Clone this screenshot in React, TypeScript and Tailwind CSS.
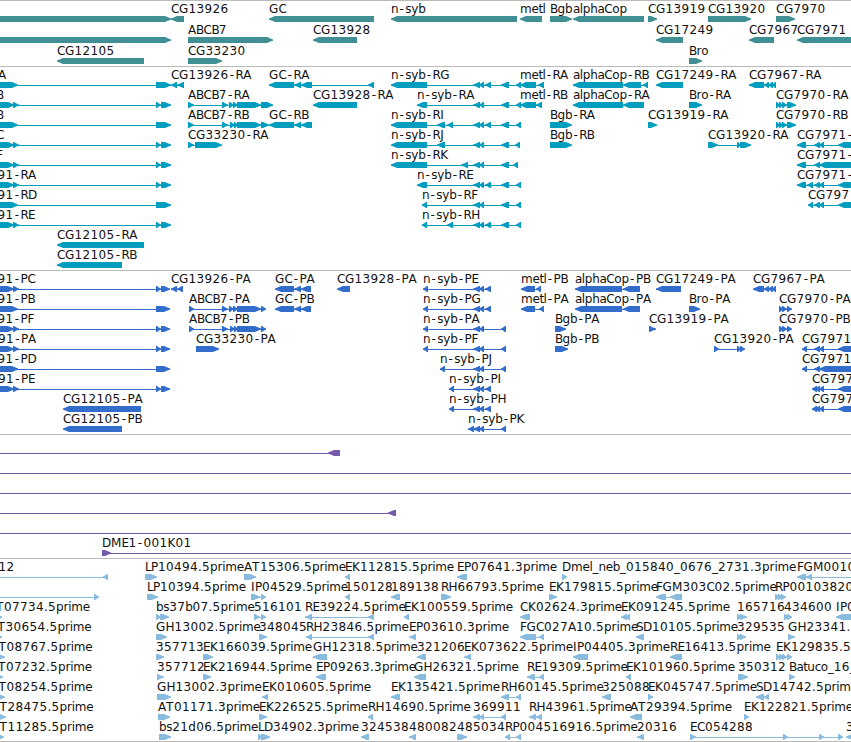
type Dir = '<' | '>'
type Span = [number, number]
// label, strand, exons, label x when it differs from the first exon
type Item = [string, Dir, Span[], number?]

const ARROW = 6

// glyph advances of the 12px label font, digits take 8
const ADVANCE: Record<string, number> = {
  A: 8, B: 7.4, C: 8, D: 9, E: 7, F: 6.5, G: 9.6, H: 9, I: 4, J: 4, K: 8, L: 6, M: 10.5, P: 7, R: 7.6, S: 7, T: 8,
  a: 6.8, b: 7.3, c: 6, d: 8, e: 7, g: 7.5, h: 7.2, i: 3, l: 3, m: 11.5, n: 7.3, o: 7.1, p: 7.5, r: 4.8, s: 6, t: 4,
  u: 7.5, y: 7, '-': 7, '.': 4, _: 6,
}

// exon groups shared by several transcripts
const LEFT_A: Span[] = [[-20, 18], [156, 171]]
const LEFT_B: Span[] = [[-20, 14], [13, 19], [156, 161], [161, 171]]
const LEFT_PA: Span[] = [[-20, 18], [156, 170]]
const LEFT_PB: Span[] = [[-20, 14], [13, 19], [156, 161], [161, 170]]
const SYB: Span[] = [[473, 480], [479, 484]]
const SYB3: Span[] = [...SYB, [485, 491]]
const SYB_END: Span[] = [[501, 509], [516, 521]]

const genes: Item[][] = [
  [
    ['', '>', [[-20, 171]]],
    ['CG13926', '<', [[171, 184]]],
    ['GC', '<', [[269, 374]]],
    ['n-syb', '<', [[391, 517]]],
    ['metl', '<', [[520, 542]]],
    ['Bgb', '>', [[550, 572]]],
    ['alphaCop', '<', [[573, 644]]],
    ['CG13919', '>', [[648, 657]]],
    ['CG13920', '>', [[708, 751]]],
    ['CG7970', '>', [[776, 795]]],
  ],
  [
    ['', '>', [[-20, 171]]],
    ['ABCB7', '>', [[188, 273]]],
    ['CG13928', '<', [[313, 357]]],
    ['CG17249', '<', [[656, 683]]],
    ['CG7967', '<', [[749, 774]]],
    ['CG7971', '<', [[797, 870]]],
  ],
  [
    ['CG12105', '<', [[57, 144]]],
    ['CG33230', '>', [[188, 222]]],
    ['Bro', '>', [[689, 702]]],
  ],
]

const transcripts: Item[][] = [
  [
    ['A', '>', LEFT_A, -2],
    ['CG13926-RA', '<', [[171, 177], [177, 184]]],
    ['GC-RA', '<', [[269, 294], [294, 301], [301, 312], [368, 374]]],
    ['n-syb-RG', '<', [[391, 427], ...SYB3, ...SYB_END]],
    ['metl-RA', '<', [[520, 536], [538, 544]]],
    ['alphaCop-RB', '<', [[573, 623], [623, 641], [643, 648]]],
    ['CG17249-RA', '<', [[656, 683]]],
    ['CG7967-RA', '<', [[749, 764], [764, 769], [768, 773], [772, 776]]],
  ],
  [
    ['B', '>', LEFT_B, -4],
    ['ABCB7-RA', '>', [[188, 194], [222, 228], [229, 234], [233, 238], [237, 261], [261, 273]]],
    ['CG13928-RA', '<', [[313, 357]]],
    ['n-syb-RA', '<', [[417, 427], ...SYB, ...SYB_END]],
    ['metl-RB', '<', [[520, 536], [536, 542]]],
    ['alphaCop-RA', '<', [[573, 623], [623, 644]]],
    ['Bro-RA', '>', [[689, 702]]],
    ['CG7970-RA', '>', [[776, 780], [779, 783], [782, 787], [787, 796]]],
  ],
  [
    ['B', '>', LEFT_A, -4],
    ['ABCB7-RB', '>', [[188, 194], [222, 228], [230, 235], [234, 238], [237, 261], [261, 269]]],
    ['GC-RB', '<', [[269, 294], [294, 301], [301, 312]]],
    ['n-syb-RI', '<', [[391, 427], [437, 445], [447, 453], ...SYB3, ...SYB_END]],
    ['Bgb-RA', '>', [[550, 572]]],
    ['CG13919-RA', '>', [[648, 657]]],
    ['CG7970-RB', '>', [[776, 780], [779, 783], [782, 787], [787, 796]]],
  ],
  [
    ['C', '>', LEFT_B, -4],
    ['CG33230-RA', '>', [[188, 194], [195, 222]]],
    ['n-syb-RJ', '<', [[391, 427], [437, 445], ...SYB, [501, 509], [515, 520]]],
    ['Bgb-RB', '>', [[550, 572]]],
    ['CG13920-RA', '>', [[708, 718], [737, 741], [740, 751]]],
    ['CG7971-', '<', [[797, 806], [814, 820], [819, 824], [838, 870]]],
  ],
  [
    ['F', '>', LEFT_B, -4],
    ['n-syb-RK', '<', [[391, 427], [461, 468], ...SYB, [501, 509], [513, 518]]],
    ['CG7971-', '<', [[797, 806], [814, 820], [819, 870]]],
  ],
  [
    ['91-RA', '>', LEFT_B, -2.5],
    ['n-syb-RE', '<', [[417, 427], ...SYB3, ...SYB_END]],
    ['CG7971-', '<', [[797, 806], [807, 813], [814, 820], [819, 824], [838, 870]]],
  ],
  [
    ['91-RD', '>', LEFT_A, -2.5],
    ['n-syb-RF', '<', [[422, 427], ...SYB, ...SYB_END]],
    ['CG797', '<', [[808, 813], [814, 820], [819, 824], [838, 870]]],
  ],
  [
    ['91-RE', '>', LEFT_B, -2.5],
    ['n-syb-RH', '<', [[422, 427], [447, 453], ...SYB3, ...SYB_END]],
  ],
  [['CG12105-RA', '<', [[57, 144]]]],
  [['CG12105-RB', '<', [[57, 122]]]],
]

const proteins: Item[][] = [
  [
    ['91-PC', '>', LEFT_PB, -2.5],
    ['CG13926-PA', '<', [[171, 177], [177, 183]]],
    ['GC-PA', '<', [[275, 294], [294, 301], [301, 311]]],
    ['CG13928-PA', '<', [[337, 350]]],
    ['n-syb-PE', '<', [[423, 428], ...SYB3]],
    ['metl-PB', '<', [[521, 535], [536, 541]]],
    ['alphaCop-PB', '<', [[575, 622], [623, 640]]],
    ['CG17249-PA', '<', [[656, 681]]],
    ['CG7967-PA', '<', [[753, 764], [764, 769], [768, 773], [772, 776]]],
  ],
  [
    ['91-PB', '>', LEFT_PA, -2.5],
    ['ABCB7-PA', '>', [[189, 194], [222, 228], [229, 234], [233, 238], [237, 261], [261, 266]]],
    ['GC-PB', '<', [[275, 294], [294, 301], [301, 311]]],
    ['n-syb-PG', '<', [[423, 428], ...SYB3]],
    ['metl-PA', '<', [[521, 535], [539, 544]]],
    ['alphaCop-PA', '<', [[575, 622], [623, 640]]],
    ['Bro-PA', '>', [[689, 700]]],
    ['CG7970-PA', '>', [[779, 783], [782, 787], [787, 792]]],
  ],
  [
    ['91-PF', '>', LEFT_PB, -2.5],
    ['ABCB7-PB', '>', [[189, 194], [222, 228], [230, 235], [234, 238], [237, 261], [261, 266]]],
    ['n-syb-PA', '<', [[423, 428], ...SYB, [501, 506]]],
    ['Bgb-PA', '>', [[555, 566]]],
    ['CG13919-PA', '>', [[649, 656]]],
    ['CG7970-PB', '>', [[779, 783], [782, 787], [787, 792]]],
  ],
  [
    ['91-PA', '>', LEFT_PB, -2],
    ['CG33230-PA', '>', [[196, 219]]],
    ['n-syb-PF', '<', [[423, 428], ...SYB, [501, 506]]],
    ['Bgb-PB', '>', [[555, 568]]],
    ['CG13920-PA', '>', [[714, 719], [737, 741], [740, 745]]],
    ['CG7971', '<', [[802, 807], [814, 820], [819, 824], [838, 870]]],
  ],
  [
    ['91-PD', '>', LEFT_PA, -2.5],
    ['n-syb-PJ', '<', [[440, 445], ...SYB, [501, 506]]],
    ['CG7971', '<', [[802, 807], [814, 820], [819, 870]]],
  ],
  [
    ['91-PE', '>', LEFT_PB, -2],
    ['n-syb-PI', '<', [[449, 454], ...SYB3]],
    ['CG797', '<', [[812, 817], [815, 820], [819, 824], [838, 870]]],
  ],
  [
    ['CG12105-PA', '<', [[63, 141]]],
    ['n-syb-PH', '<', [[449, 454], ...SYB3]],
    ['CG797', '<', [[812, 817], [815, 820], [819, 824], [838, 870]]],
  ],
  [
    ['CG12105-PB', '<', [[63, 122]]],
    ['n-syb-PK', '<', [[468, 474], ...SYB, [501, 506]]],
  ],
]

const clones: Item[][] = [
  [['', '<', [[-20, -10], [328, 340]]]],
  [['', '<', [[-20, -10], [860, 870]]]],
  [['', '<', [[-20, -10], [860, 870]]]],
  [['', '<', [[-20, -10], [388, 396]]]],
  [['', '<', [[-20, -10], [860, 870]]]],
  [['DME1-001K01', '>', [[102, 111], [860, 870]]]],
]

const ests: Item[][] = [
  [
    ['12', '<', [[-20, -10], [103, 108]], -1.5],
    ['LP10494.5prime', '>', [[145, 157]]],
    ['AT15306.5prime', '>', [[244, 256]]],
    ['EK112815.5prime', '<', [[345, 350]]],
    ['EP07641.3prime', '<', [[457, 467]]],
    ['Dmel_neb_015840_0676_2731.3prime', '>', [[562, 567]]],
    ['FGM0010', '<', [[797, 806], [806, 812], [860, 870]]],
  ],
  [
    ['', '>', [[-20, -10], [94, 99]]],
    ['LP10394.5prime', '>', [[147, 158]]],
    ['IP04529.5prime', '>', [[251, 260], [261, 266]]],
    ['150128', '<', [[345, 350]]],
    ['189138', '<', [[391, 400]]],
    ['RH66793.5prime', '>', [[441, 451]]],
    ['EK179815.5prime', '>', [[549, 557]]],
    ['FGM303C02.5prime', '<', [[656, 666], [670, 682]]],
    ['RP00103820', '>', [[775, 780], [778, 783], [781, 786]]],
  ],
  [
    ['T07734.5prime', '>', [[-8, 2]], -4],
    ['bs37b07.5prime', '>', [[156, 161], [160, 169]]],
    ['516101', '>', [[254, 260], [261, 266]]],
    ['RE39224.5prime', '<', [[305, 312], [368, 374]]],
    ['EK100559.5prime', '<', [[404, 409]]],
    ['CK02624.3prime', '<', [[520, 530]]],
    ['EK091245.5prime', '<', [[621, 627], [625, 630]]],
    ['165716', '>', [[737, 742], [740, 747]]],
    ['434600', '>', [[784, 789], [787, 792]]],
    ['IP0', '<', [[836, 870]]],
  ],
  [
    ['T30654.5prime', '>', [[-8, 2]], -2.5],
    ['GH13002.5prime', '>', [[156, 167]]],
    ['348045', '>', [[259, 267]]],
    ['RH23846.5prime', '<', [[306, 312], [368, 374]]],
    ['EP03610.3prime', '<', [[409, 416]]],
    ['FGC027A10.5prime', '<', [[520, 536], [539, 544]]],
    ['SD10105.5prime', '<', [[636, 644]]],
    ['329535', '>', [[737, 742], [740, 746]]],
    ['GH23341.', '>', [[788, 795]]],
  ],
  [
    ['T08767.5prime', '>', [[-8, 5]], -1.5],
    ['357713', '>', [[156, 164]]],
    ['EK166039.5prime', '>', [[203, 213]]],
    ['GH12318.5prime', '<', [[313, 327]]],
    ['321206', '<', [[417, 426]]],
    ['EK073622.5prime', '<', [[464, 471]]],
    ['IP04405.3prime', '<', [[573, 588]]],
    ['RE16413.5prime', '<', [[670, 682]]],
    ['EK129835.5', '>', [[776, 780], [779, 784], [782, 787], [787, 792]]],
  ],
  [
    ['T07232.5prime', '>', [[-8, 3]], -2],
    ['357712', '>', [[157, 164]]],
    ['EK216944.5prime', '>', [[203, 211]]],
    ['EP09263.3prime', '<', [[316, 326]]],
    ['GH26321.5prime', '<', [[414, 426]]],
    ['RE19309.5prime', '<', [[527, 535], [539, 544]]],
    ['EK101960.5prime', '<', [[626, 631]]],
    ['350312', '>', [[738, 748]]],
    ['Batuco_16_', '>', [[789, 795]]],
  ],
  [
    ['T08254.5prime', '>', [[-8, 5]], -1.5],
    ['GH13002.3prime', '>', [[157, 171]]],
    ['EK010605.5prime', '<', [[262, 268]]],
    ['EK135421.5prime', '<', [[391, 400]]],
    ['RH60145.5prime', '<', [[501, 509], [516, 521]]],
    ['325088', '<', [[602, 611]]],
    ['EK045747.5prime', '>', [[648, 653]]],
    ['SD14742.5prime', '<', [[756, 764], [764, 769]]],
  ],
  [
    ['T28475.5prime', '>', [[-8, 6]], -0.5],
    ['AT01171.3prime', '>', [[158, 170]]],
    ['EK226525.5prime', '>', [[259, 267]]],
    ['RH14690.5prime', '<', [[368, 373]]],
    ['369911', '<', [...SYB, [501, 506]]],
    ['RH43961.5prime', '<', [[529, 536], [536, 542]]],
    ['AT29394.5prime', '<', [[630, 642]]],
    ['EK122821.5prime', '>', [[744, 749]]],
  ],
  [
    ['T11285.5prime', '>', [[-8, 4]], -0.5],
    ['bs21d06.5prime', '>', [[159, 171]]],
    ['LD34902.3prime', '>', [[258, 263], [261, 270]]],
    ['324538', '<', [[361, 369]]],
    ['480082', '<', [[409, 416]]],
    ['485034', '>', [[457, 467]]],
    ['RP004516916.5prime', '<', [[505, 510], [516, 521]]],
    ['20316', '<', [[637, 644]]],
    ['EC054288', '>', [[690, 696], [783, 788], [819, 824], [838, 843]]],
    ['3', '<', [[846, 870]]],
  ],
]

// short exons are plain triangles, longer ones a bar with a blunt head
function exonPath([a, b]: Span, dir: Dir) {
  const long = b - a > 7
  const head = long ? ARROW : b - a - 1
  const shoulder = long ? 2.5 : head / 2
  const [tail, tip, s] = dir === '>' ? [a, b, -1] : [b, a, 1]
  return `M${tail} 0H${tip + s * head}L${tip + s * shoulder} 1.4L${tip} 2.4V3.8L${tip + s * shoulder} 4.6L${tip + s * head} 6H${tail}Z`
}

function glyphXs(label: string, start: number) {
  let x = start
  return [...label]
    .map((ch) => {
      const at = ch === '-' ? x + 1.2 : x
      x += ADVANCE[ch] ?? 8
      return at.toFixed(1)
    })
    .join(' ')
}

function Row({ items, className }: { items: Item[]; className: string }) {
  return (
    <svg className={`block w-[851px] overflow-visible ${className}`} fill="currentColor">
      {items.map(([, dir, exons], i) => (
        <g key={i} transform="translate(0 15)">
          {exons.length > 1 && (
            <rect x={exons[0][0]} y={3} width={exons[exons.length - 1][1] - exons[0][0] - 1} height={1} />
          )}
          {exons.map((e, j) => (
            <path key={j} d={exonPath(e, dir)} />
          ))}
        </g>
      ))}
      {items.map(([label, , exons, x], i) =>
        label ? (
          <text key={i} x={glyphXs(label, x ?? exons[0][0])} y={12} className="fill-[#111111] text-[12px]">
            {label}
          </text>
        ) : null,
      )}
    </svg>
  )
}

function Track({ rows, className, rowClass = 'h-5' }: { rows: Item[][]; className: string; rowClass?: string }) {
  return (
    <section className={`border-t border-[#bbbbbb] ${className}`}>
      {rows.map((items, i) => (
        <Row key={i} items={items} className={rowClass} />
      ))}
    </section>
  )
}

export default function App() {
  return (
    <main className="h-[742px] w-[851px] overflow-hidden bg-white font-['DejaVu_Sans',sans-serif]">
      <Track rows={genes} className="pb-[2px] text-[#408f94]" rowClass="h-[21px]" />
      <Track rows={transcripts} className="pb-[3px] text-[#009dbf]" />
      <Track rows={proteins} className="pb-[3px] text-[#326dcc]" />
      <Track rows={clones} className="pb-[3px] text-[#7659aa]" />
      <Track rows={ests} className="border-b pb-[2px] text-[#88bbdd]" />
    </main>
  )
}
